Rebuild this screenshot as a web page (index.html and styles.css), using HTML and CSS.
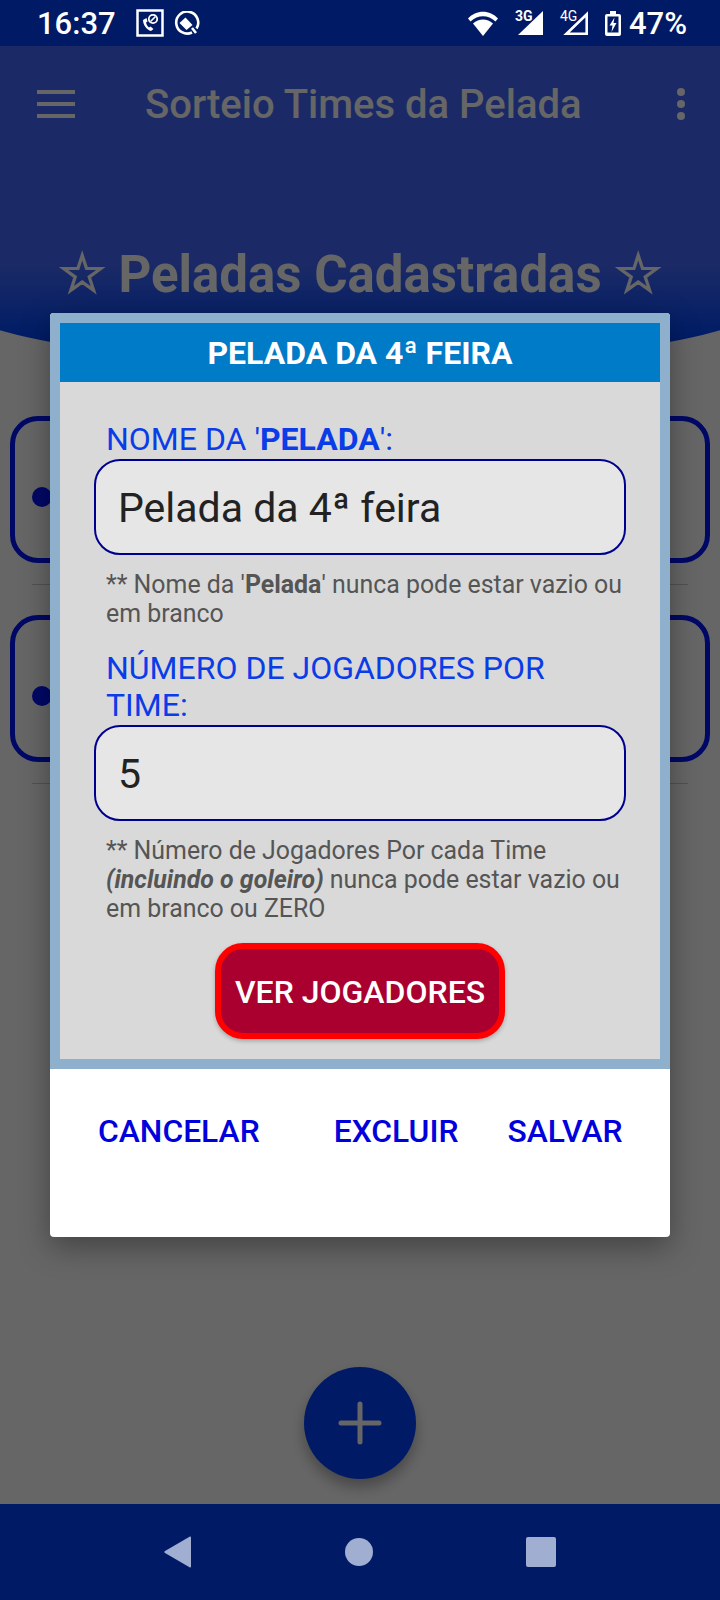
FILE: index.html
```html
<!DOCTYPE html>
<html lang="pt-BR">
<head>
    <meta charset="UTF-8">
    <meta name="viewport" content="width=device-width, initial-scale=1.0">
    <title>Sorteio Times da Pelada</title>
    <link rel="stylesheet" href="styles.css">
</head>
<body>
    <div class="phone">
        <div class="status-bar">
            <div class="status-left">
                <span class="clock">16:37</span>
                <svg class="icon-call" width="28" height="28" viewBox="0 0 28 28">
                    <rect x="1.5" y="1.5" width="25" height="25" fill="none" stroke="#fff" stroke-width="2.5"/>
                    <path d="M7 11c0 5 4 10 8 11l2.500-2-3-2.500-1.500 1c-1.500-1-2.500-3-3-5l1.500-1-1-3.500z" fill="#fff"/>
                    <circle cx="17" cy="10" r="4.200" fill="none" stroke="#fff" stroke-width="1.800"/>
                    <path d="M14.500 12.500l5-5" stroke="#fff" stroke-width="1.600"/>
                </svg>
                <svg class="icon-alert" width="28" height="24" viewBox="0 0 28 24">
                    <path d="M20 21.500a11 11 0 1 1 4.500-4" fill="none" stroke="#fff" stroke-width="2.600"/>
                    <path d="M7.500 12l6-5.500 7 7.500-6 5z" fill="#fff"/>
                    <path d="M20 17l4 5" stroke="#fff" stroke-width="2.600"/>
                </svg>
            </div>
            <div class="status-right">
                <svg class="icon-wifi" width="30" height="25" viewBox="0 0 30 25">
                    <path d="M0 7.500C8-1.500 22-1.500 30 7.500l-2.500 3C20 3.500 10 3.500 2.500 10.500z" fill="#fff"/>
                    <path d="M5 12.500c6-5.500 14-5.500 20 0L15 25z" fill="#fff"/>
                </svg>
                <div class="signal">
                    <span class="signal-tag">3G</span>
                    <svg width="25" height="24" viewBox="0 0 25 24"><path d="M0 24L25 0v24z" fill="#fff"/></svg>
                </div>
                <div class="signal signal-weak">
                    <span class="signal-tag">4G</span>
                    <svg width="25" height="24" viewBox="0 0 25 24"><path d="M3.500 22.700L23.700 3.200v19.500z" fill="none" stroke="#fff" stroke-width="2.600"/></svg>
                </div>
                <svg class="icon-battery" width="16" height="25" viewBox="0 0 16 25">
                    <path d="M5 0h6v3h3a2 2 0 0 1 2 2v18a2 2 0 0 1-2 2H2a2 2 0 0 1-2-2V5a2 2 0 0 1 2-2h3z" fill="#fff"/>
                    <rect x="2.500" y="5.500" width="11" height="16" fill="#001a66"/>
                    <path d="M9.500 6.500L4.500 14.500h3l-1 6.500 5-9h-3z" fill="#fff"/>
                </svg>
                <span class="battery-level">47%</span>
            </div>
        </div>

        <div class="screen">
            <div class="hero">
                <div class="toolbar">
                    <div class="menu-icon"><span></span><span></span><span></span></div>
                    <div class="toolbar-title">Sorteio Times da Pelada</div>
                    <div class="more-icon"><span></span><span></span><span></span></div>
                </div>
                <h1 class="hero-title"><span class="hero-star">☆</span> Peladas Cadastradas <span class="hero-star">☆</span></h1>
            </div>

            <div class="list">
                <div class="list-item"><div class="item-card"><span class="item-dot"></span></div></div>
                <div class="list-item"><div class="item-card"><span class="item-dot"></span></div></div>
            </div>

            <div class="fab">
                <svg width="44" height="44" viewBox="0 0 44 44">
                    <path d="M22 3v38M3 22h38" stroke="#fff" stroke-width="5" stroke-linecap="round"/>
                </svg>
            </div>

            <div class="scrim"></div>

            <div class="dialog">
                <div class="dialog-frame">
                    <div class="dialog-title">PELADA DA 4ª FEIRA</div>
                    <div class="dialog-body">
                        <label class="field-label">NOME DA '<b>PELADA</b>':</label>
                        <div class="field-box">Pelada da 4ª feira</div>
                        <p class="field-hint">** Nome da '<b>Pelada</b>' nunca pode estar vazio ou em branco</p>

                        <label class="field-label field-label-second">NÚMERO DE JOGADORES POR TIME:</label>
                        <div class="field-box">5</div>
                        <p class="field-hint">** Número de Jogadores Por cada Time <b><i>(incluindo o goleiro)</i></b> nunca pode estar vazio ou em branco ou ZERO</p>

                        <div class="players-row">
                            <button class="players-button">VER JOGADORES</button>
                        </div>
                    </div>
                </div>
                <div class="dialog-actions">
                    <a href="#" class="action-cancel">CANCELAR</a>
                    <a href="#" class="action-delete">EXCLUIR</a>
                    <a href="#">SALVAR</a>
                </div>
            </div>
        </div>

        <div class="nav-bar">
            <svg width="28" height="32" viewBox="0 0 28 32"><path d="M27 1.500V30.500a1 1 0 0 1-1.500.8L1 17a1.200 1.200 0 0 1 0-2L25.500.7a1 1 0 0 1 1.500.8z" fill="#a0aed2"/></svg>
            <span class="nav-home"></span>
            <span class="nav-recent"></span>
        </div>
    </div>
</body>
</html>
```

FILE: styles.css
```css
* {
    box-sizing: border-box;
}
body {
    font-family: Roboto, "Liberation Sans", sans-serif;
    background-color: #fff;
    margin: 0;
    padding: 0;
}
.phone {
    width: 720px;
    height: 1600px;
    display: flex;
    flex-direction: column;
    overflow: hidden;
}
.status-bar {
    height: 46px;
    background-color: #001a66;
    color: #fff;
    display: flex;
    justify-content: space-between;
    align-items: center;
    padding: 0 33px 0 37px;
}
.status-left {
    display: flex;
    align-items: center;
}
.clock {
    font-size: 31px;
    font-weight: 500;
    margin-right: 20px;
}
.icon-call {
    margin-right: 8px;
}
.status-right {
    display: flex;
    align-items: center;
}
.icon-wifi {
    margin-right: 20px;
}
.signal {
    position: relative;
    width: 25px;
    height: 24px;
    margin-right: 20px;
    display: flex;
}
.signal-tag {
    position: absolute;
    left: -3px;
    top: -2px;
    font-size: 14px;
    font-weight: 700;
    line-height: 14px;
}
.signal-weak .signal-tag {
    font-weight: 400;
}
.icon-battery {
    margin-right: 8px;
    margin-left: -3px;
}
.battery-level {
    font-size: 31px;
    font-weight: 500;
}

.screen {
    flex: 1;
    position: relative;
    background-color: #fff;
}
.hero {
    height: 318px;
    margin: 0 -40px;
    padding: 0 40px;
    background: linear-gradient(#4469ff 0, #4469ff 219px, #0048ff 292px);
    border-radius: 0 0 50% 50% / 0 0 60px 60px;
}
.toolbar {
    display: flex;
    align-items: center;
    height: 110px;
    padding: 6px 37px 0;
}
.menu-icon span {
    display: block;
    width: 38px;
    height: 4px;
    background-color: #fff;
    margin-bottom: 8px;
}
.menu-icon span:last-child {
    margin-bottom: 0;
}
.toolbar-title {
    flex: 1;
    color: #fff;
    font-size: 40px;
    font-weight: 500;
    margin-left: 70px;
}
.more-icon {
    margin-right: -2px;
}
.more-icon span {
    display: block;
    width: 8px;
    height: 8px;
    border-radius: 50%;
    background-color: #fff;
    margin-bottom: 4px;
}
.more-icon span:last-child {
    margin-bottom: 0;
}
.hero-title {
    margin: 88px 0 0;
    text-align: center;
    color: #fff;
    font-size: 51px;
    font-weight: 700;
    line-height: 60px;
}
.hero-star {
    font-size: 54px;
}

.list {
    padding: 52px 10px 0;
}
.list-item {
    height: 199px;
    position: relative;
}
.list-item:after {
    content: "";
    position: absolute;
    left: 22px;
    right: 22px;
    top: 168px;
    height: 1px;
    background-color: #ccc;
}
.item-card {
    height: 147px;
    border: 5px solid #0014ff;
    border-radius: 28px;
    display: flex;
    align-items: center;
    padding: 15px 0 0 17px;
}
.item-dot {
    width: 20px;
    height: 20px;
    border-radius: 50%;
    background-color: #0014ff;
}
.fab {
    position: absolute;
    left: 304px;
    top: 1321px;
    width: 112px;
    height: 112px;
    border-radius: 50%;
    background-color: #0041ff;
    display: flex;
    align-items: center;
    justify-content: center;
    box-shadow: 0 8px 14px rgba(0,0,0,0.3);
}
.scrim {
    position: absolute;
    top: 0;
    left: 0;
    right: 0;
    bottom: 0;
    background-color: rgba(0,0,0,0.6);
}

.dialog {
    position: absolute;
    left: 50px;
    top: 267px;
    width: 620px;
    height: 924px;
    background-color: #fff;
    border-radius: 4px;
    overflow: hidden;
    box-shadow: 0 10px 30px rgba(0,0,0,0.35);
}
.dialog-frame {
    border: 10px solid #8fb0cc;
    background-color: #d9d9d9;
    height: 756px;
}
.dialog-title {
    height: 59px;
    line-height: 61px;
    background-color: #007bc8;
    color: #fff;
    text-align: center;
    font-size: 32px;
    font-weight: 700;
}
.dialog-body {
    padding: 39px 34px 0;
}
.field-label {
    display: block;
    color: #0a3ce8;
    font-size: 32px;
    line-height: 37px;
    margin: 0 0 1px 12px;
}
.field-label-second {
    margin-top: 22px;
}
.field-box {
    height: 96px;
    border: 2px solid #00008f;
    border-radius: 26px;
    background-color: #e6e6e6;
    color: #222;
    font-size: 41px;
    line-height: 94px;
    padding-left: 22px;
}
.field-hint {
    margin: 15px 0 0 12px;
    color: #555;
    font-size: 24.900px;
    line-height: 29px;
}
.players-row {
    display: flex;
    justify-content: center;
    margin-top: 20px;
}
.players-button {
    width: 290px;
    height: 96px;
    border: 6px solid #ff0000;
    border-radius: 28px;
    background-color: #aa0030;
    color: #fff;
    font-family: inherit;
    font-size: 32px;
    font-weight: 500;
    padding: 1px 0 0;
    box-shadow: 0 2px 4px rgba(0,0,0,0.25);
}
.dialog-actions {
    display: flex;
    padding: 44px 50px 0 48px;
}
.dialog-actions a {
    color: #0000dd;
    font-size: 31.800px;
    font-weight: 500;
    line-height: 37px;
    text-decoration: none;
}
.action-cancel {
    margin-right: 74px;
}
.action-delete {
    margin-right: 49px;
}

.nav-bar {
    height: 96px;
    background-color: #001a66;
    display: flex;
    align-items: center;
    padding: 0 164px;
    justify-content: space-between;
}
.nav-home {
    width: 28px;
    height: 28px;
    border-radius: 50%;
    background-color: #a0aed2;
}
.nav-recent {
    width: 30px;
    height: 30px;
    border-radius: 2px;
    background-color: #a0aed2;
}
```
